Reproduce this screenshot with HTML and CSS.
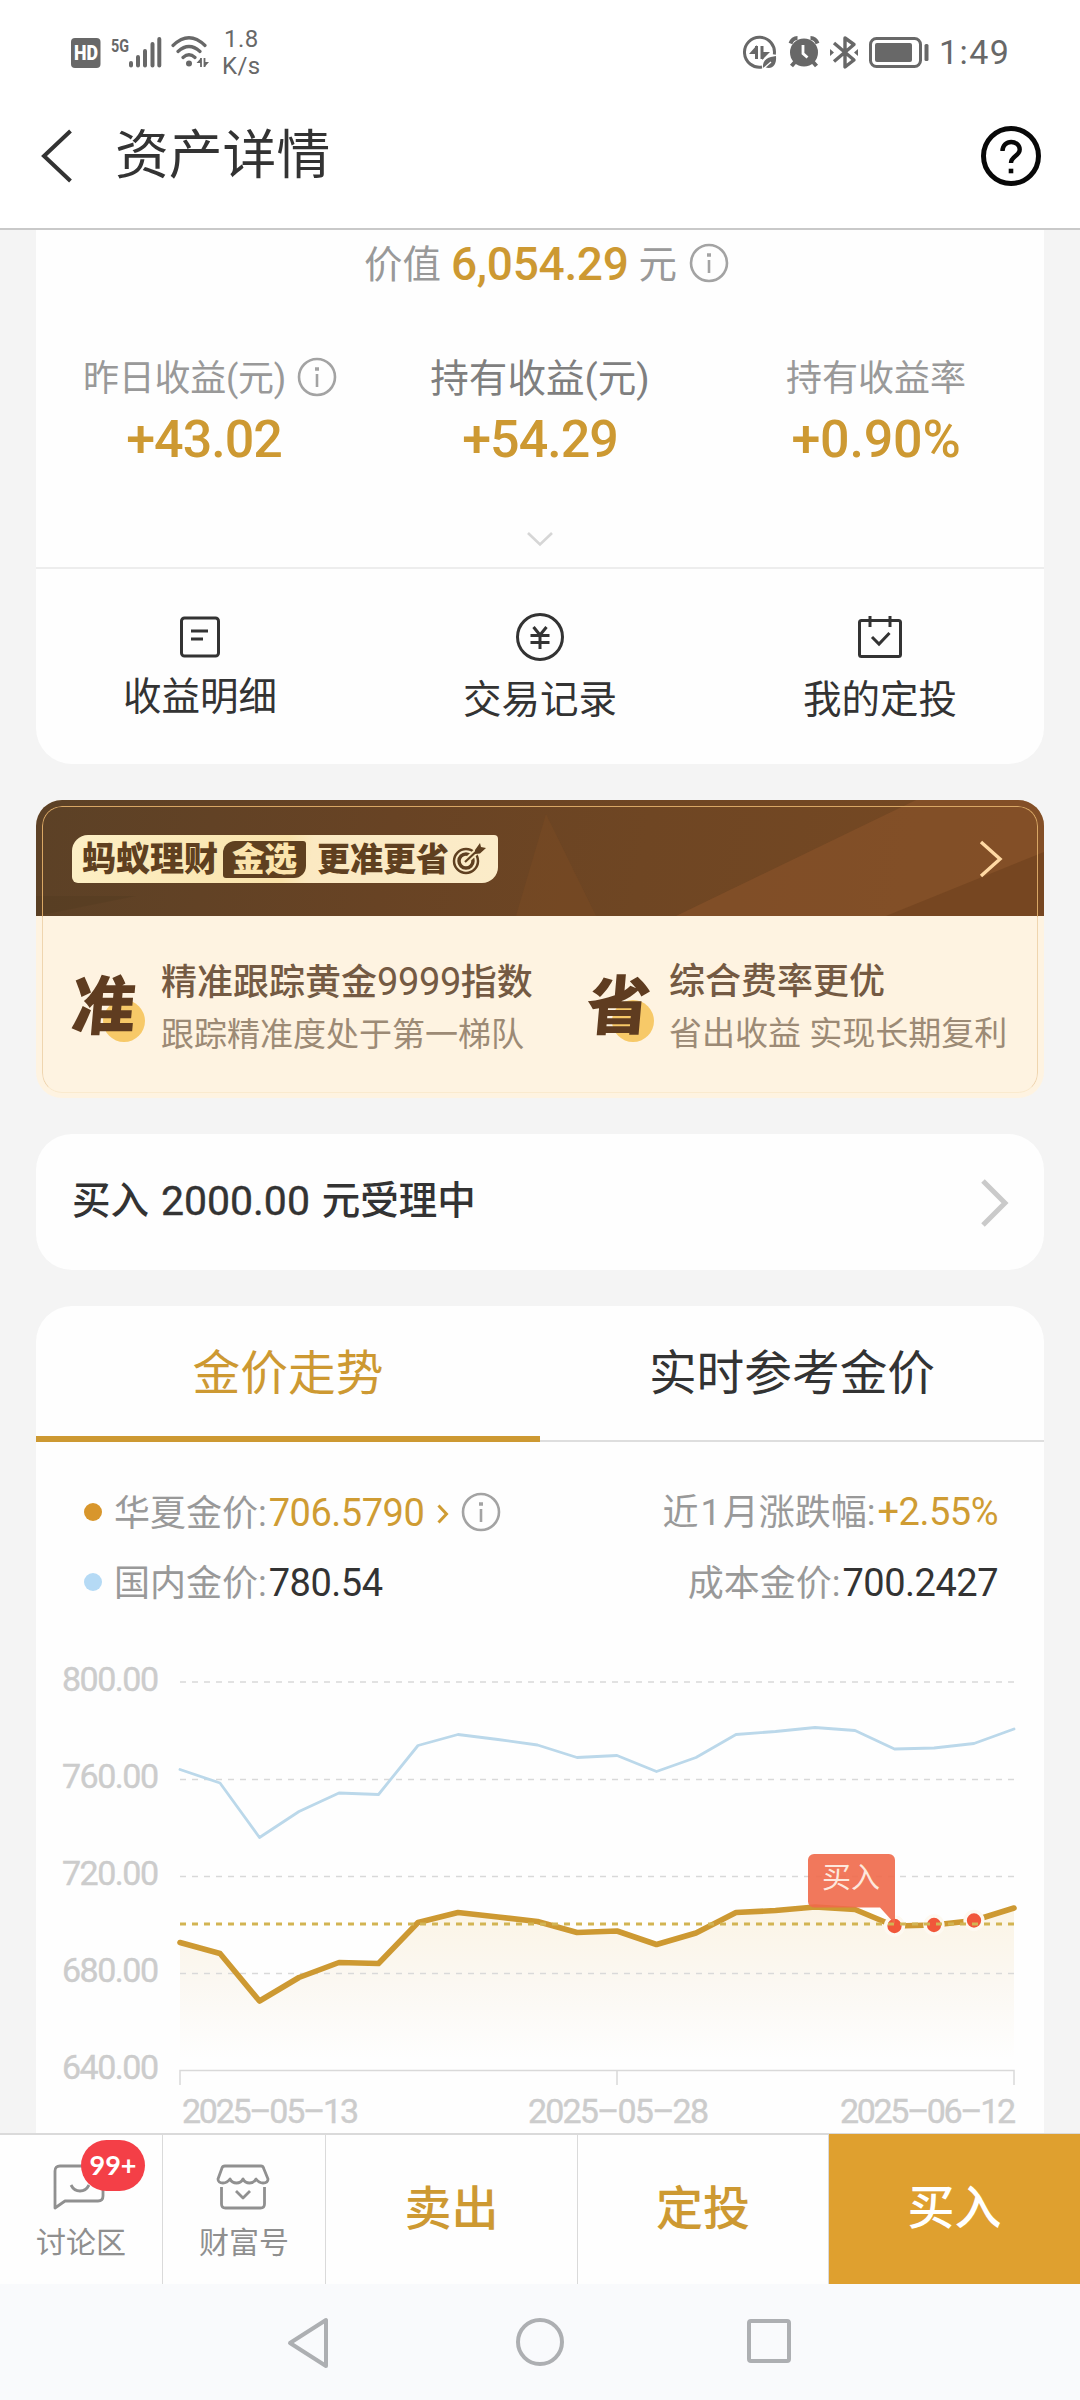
FILE: index.html
```html
<!DOCTYPE html>
<html lang="zh-CN">
<head>
<meta charset="utf-8">
<title>资产详情</title>
<link rel="stylesheet" href="styles.css">
</head>
<body>
<div class="screen">
  <div class="status">
    <svg class="status-left" width="150" height="40" viewBox="66 32 150 40">
      <rect x="71" y="38" width="29.500" height="30" rx="4" fill="#686868"/>
      <text x="74" y="60" class="st-hd" textLength="24" lengthAdjust="spacingAndGlyphs">HD</text>
      <text x="111" y="51.500" class="st-5g" textLength="18" lengthAdjust="spacingAndGlyphs">5G</text>
      <g stroke="#686868" stroke-width="4" stroke-linecap="round">
        <path d="M131 63v2.500M138 57v8.500M145 51v14.500M152.500 44v21.500M159.300 39v26.500"/>
      </g>
      <g fill="none" stroke="#686868" stroke-width="3.200" stroke-linecap="round">
        <path d="M173 45.500Q189 30 205 45.500M178 51.500Q189 41.500 200 51.500M183 57.500Q189 52 195 57.500"/>
      </g>
      <circle cx="189" cy="63.500" r="3" fill="#686868"/>
      <path d="M201 58v9M204.500 58v9" stroke="#686868" stroke-width="1.800"/>
      <path d="M201 58l-4.500 5h4.500zM204.500 67l4.500-5h-4.500z" fill="#686868"/>
    </svg>
    <div class="speed"><span>1.8</span><span>K/s</span></div>
    <svg class="status-right" width="190" height="40" viewBox="740 32 190 40">
      <path d="M762 67A15 15 0 1 1 774.300 54.500" fill="none" stroke="#686868" stroke-width="3"/>
      <path d="M756.500 46v13M762 46v13" stroke="#686868" stroke-width="3"/>
      <path d="M757 45l-8 9h8zM762 60l8-8h-8z" fill="#686868"/>
      <path d="M763 68c-1-9 6-11 13-12c1 10-5 14-11 11z" fill="#686868"/>
      <path d="M763 69l8-7" stroke="#fff" stroke-width="1.300"/>
      <circle cx="804" cy="52.500" r="14" fill="#686868"/>
      <path d="M790.500 43.500q2-5.500 7-5.500M817.500 43.500q-2-5.500-7-5.500" fill="none" stroke="#686868" stroke-width="4"/>
      <path d="M795 62l-3.500 4M813 62l3.500 4" stroke="#686868" stroke-width="4"/>
      <path d="M803 45v8.500l4.500 4" fill="none" stroke="#fff" stroke-width="2.800"/>
      <path d="M834 43l20 17-9 7V38l9 6.500-20 17" fill="none" stroke="#686868" stroke-width="3.400" stroke-linejoin="round"/>
      <path d="M830 49l4 3.500-4 3.500zM858 49l-4 3.500 4 3.500z" fill="#686868"/>
      <rect x="870.500" y="38.500" width="50" height="28" rx="6" fill="none" stroke="#686868" stroke-width="3"/>
      <rect x="875" y="43" width="37" height="19" rx="2" fill="#686868"/>
      <rect x="924.500" y="44" width="4" height="17" rx="1.500" fill="#686868"/>
    </svg>
    <span class="clock">1:49</span>
  </div>

  <header class="nav">
    <svg width="32" height="54" viewBox="0 0 32 54"><path d="M29.500 2L3 27l26.500 25" fill="none" stroke="#333" stroke-width="4"/></svg>
    <h1>资产详情</h1>
    <svg class="help" width="60" height="60" viewBox="0 0 60 60" fill="none" stroke="#080808">
      <circle cx="30" cy="30" r="27.500" stroke-width="5"/>
      <path d="M21.500 25c0-5.500 4-9 8.700-9 5 0 8.500 3.300 8.500 7.500 0 6.500-8.700 6.500-8.700 13.500" stroke-width="4.400"/>
      <path d="M27.700 45h4.600" stroke-width="4.600"/>
    </svg>
  </header>

  <main>
    <section class="card asset">
      <div class="value-row">
        <span class="value-label">价值</span><b class="value-num">6,054.29</b><span class="value-label">元</span>
        <svg class="info" width="40" height="40" viewBox="0 0 40 40"><circle cx="20" cy="20" r="18"/><path d="M20 17v13"/><path class="tip" d="M18 12h4"/></svg>
      </div>
      <div class="stats">
        <div class="stat first">
          <div class="stat-label"><span>昨日收益(元)</span><svg class="info" width="40" height="40" viewBox="0 0 40 40"><circle cx="20" cy="20" r="18"/><path d="M20 17v13"/><path class="tip" d="M18 12h4"/></svg></div>
          <div class="stat-num">+43.02</div>
        </div>
        <div class="stat active">
          <div class="stat-label"><span>持有收益(元)</span></div>
          <div class="stat-num">+54.29</div>
        </div>
        <div class="stat">
          <div class="stat-label"><span>持有收益率</span></div>
          <div class="stat-num percent">+0.90%</div>
        </div>
      </div>
      <div class="expand"><svg width="28" height="16" viewBox="0 0 28 16"><path d="M2 2l12 11.500L26 2" fill="none" stroke="#d6d6d6" stroke-width="2.600"/></svg></div>
      <div class="actions">
        <div class="action up">
          <svg width="54" height="54" viewBox="0 0 54 54"><rect x="8.500" y="8" width="37" height="38" rx="3"/><path d="M18 21h17M18 29h12"/></svg>
          <span>收益明细</span>
        </div>
        <div class="action">
          <svg width="54" height="54" viewBox="0 0 54 54"><circle cx="27" cy="27" r="22.500"/><path d="M20.500 17l6.500 8 6.500-8M27 25v14M17.500 25.500h19M17.500 32.500h19"/></svg>
          <span>交易记录</span>
        </div>
        <div class="action">
          <svg width="54" height="54" viewBox="0 0 54 54"><rect x="6.500" y="10.500" width="41" height="36" rx="2"/><path d="M17 6v11M37 6v11M19 27l7 7 10.500-11"/></svg>
          <span>我的定投</span>
        </div>
      </div>
    </section>

    <section class="banner">
      <div class="banner-top">
        <svg class="facets" width="1008" height="116" viewBox="0 0 1008 116">
          <path d="M100 96L0 116V96z" fill="#4f3820" opacity=".35"/>
          <path d="M480 116L510 14l50 102z" fill="#865026" opacity=".3"/>
          <path d="M640 116L880 0h128v116z" fill="#8f552c" opacity=".5"/>
          <path d="M850 116L1008 52v64z" fill="#693e1b" opacity=".5"/>
        </svg>
        <div class="pill">
          <span class="brand">蚂蚁理财</span><span class="pick">金选</span><span class="slogan">更准更省</span>
          <svg width="34" height="34" viewBox="0 0 34 34" fill="none" stroke="#5f4020">
            <circle cx="14" cy="19" r="12" stroke-width="2.500"/><circle cx="14" cy="19" r="7" stroke-width="3.500"/>
            <path d="M14 19L26 8" stroke="#fbe9bd" stroke-width="6"/><path d="M13 20L27 7" stroke-width="2.200"/>
            <path d="M23 8l5-7 1 4 5 1-6 5.500-5 .5z" fill="#5f4020" stroke="none"/>
          </svg>
        </div>
        <svg class="go" width="24" height="38" viewBox="0 0 24 38"><path d="M2 2l19 17L2 36" fill="none" stroke="#ffd9a3" stroke-width="3.400"/></svg>
      </div>
      <div class="benefits">
        <div class="benefit">
          <span class="glyph">准</span>
          <div><h3>精准跟踪黄金<i>9999</i>指数</h3><p>跟踪精准度处于第一梯队</p></div>
        </div>
        <div class="benefit">
          <span class="glyph">省</span>
          <div><h3>综合费率更优</h3><p>省出收益 实现长期复利</p></div>
        </div>
      </div>
      <div class="frame"></div>
    </section>

    <section class="card pending">
      <span>买入 <i>2000.00</i> 元受理中</span>
      <svg width="30" height="50" viewBox="0 0 30 50"><path d="M3 3l22 22L3 47" fill="none" stroke="#cacaca" stroke-width="5"/></svg>
    </section>

    <section class="card trend">
      <div class="tabs"><div class="tab on">金价走势</div><div class="tab">实时参考金价</div></div>
      <div class="legend">
        <div class="leg"><span class="dot gold"></span>华夏金价:<b class="g">706.5790</b>
          <svg class="mini" width="12" height="20" viewBox="0 0 12 20"><path d="M1.500 1.500L9.500 10l-8 8.500" fill="none" stroke="#cf9c33" stroke-width="3"/></svg>
          <svg class="info" width="40" height="40" viewBox="0 0 40 40"><circle cx="20" cy="20" r="18"/><path d="M20 17v13"/><path class="tip" d="M18 12h4"/></svg>
        </div>
        <div class="leg lift"><span>近<i>1</i>月涨跌幅:</span><b class="g">+2.55%</b></div>
      </div>
      <div class="legend second">
        <div class="leg"><span class="dot blue"></span>国内金价:<b>780.54</b></div>
        <div class="leg">成本金价:<b>700.2427</b></div>
      </div>
      <svg class="chart" width="1008" height="517" viewBox="36 1616 1008 517">
        <defs><linearGradient id="area" x1="0" y1="1905" x2="0" y2="2060" gradientUnits="userSpaceOnUse"><stop offset="0" stop-color="#fbf4e5"/><stop offset=".5" stop-color="#fbf8f2"/><stop offset="1" stop-color="#fefefe"/></linearGradient></defs>
        <g class="ylab">
          <text x="62" y="1691" textLength="97">800.00</text>
          <text x="62" y="1788" textLength="97">760.00</text>
          <text x="62" y="1885" textLength="97">720.00</text>
          <text x="62" y="1982" textLength="97">680.00</text>
          <text x="62" y="2079" textLength="97">640.00</text>
        </g>
        <path fill="url(#area)" d="M180 1942.500L220 1953.500 259.500 2001 299 1977.500 339 1962.500 378.500 1963.500 418 1922.500 458 1912.500 498 1917 537.500 1921.500 577 1932.500 617 1931 656.500 1944.500 696 1933 736 1912.500 775.500 1910.500 815 1907 855 1909.500 894.500 1926 934 1925 974 1920.500 1014 1908V2070H180z"/>
        <path d="M180 1682h834M180 1779.500h834M180 1876.500h834M180 1973.500h834" stroke="#d9d9d9" stroke-width="1.600" stroke-dasharray="6 6"/>
        <path d="M180 2085v-14.500h834V2085M617 2070.500V2085" fill="none" stroke="#d9d9d9" stroke-width="1.500"/>
        <path fill="none" stroke="#bbd8ea" stroke-width="2.800" stroke-linejoin="round" stroke-linecap="round" d="M180 1769.500L220 1783 259.500 1837.500 299 1811.500 339 1793 378.500 1794.500 418 1745.500 458 1734.500 498 1739.500 537.500 1745 577 1757.500 617 1755.500 656.500 1771.500 696 1757.500 736 1734.500 775.500 1731.500 815 1727.500 855 1730.500 894.500 1749 934 1748 974 1743.500 1014 1729"/>
        <path fill="none" stroke="#cd9932" stroke-width="5.600" stroke-linejoin="round" stroke-linecap="round" d="M180 1942.500L220 1953.500 259.500 2001 299 1977.500 339 1962.500 378.500 1963.500 418 1922.500 458 1912.500 498 1917 537.500 1921.500 577 1932.500 617 1931 656.500 1944.500 696 1933 736 1912.500 775.500 1910.500 815 1907 855 1909.500 894.500 1926 934 1925 974 1920.500 1014 1908"/>
        <g fill="#f1573a" stroke="#fdf9f1" stroke-width="3.500"><circle cx="894.500" cy="1926" r="8.900"/><circle cx="934" cy="1925" r="8.900"/><circle cx="974" cy="1920.500" r="8.900"/></g>
        <path d="M180 1924h834" stroke="#d2b453" stroke-width="3" stroke-dasharray="6 6"/>
        <path d="M814 1854h75a6 6 0 0 1 6 6v64l-15-16.500h-66a6 6 0 0 1-6-6V1860a6 6 0 0 1 6-6z" fill="#f0694a" fill-opacity=".9"/>
        <text x="822" y="1888" class="tiptext" textLength="58">买入</text>
        <g class="ylab">
          <text x="182" y="2123" textLength="177">2025–05–13</text>
          <text x="528" y="2123" textLength="181">2025–05–28</text>
          <text x="840" y="2123" textLength="176">2025–06–12</text>
        </g>
      </svg>
    </section>
  </main>

  <footer class="bar">
    <div class="cell small">
      <svg width="56" height="48" viewBox="0 0 56 48"><path d="M4 45V8q0-5 5-5h38q5 0 5 5v25q0 5-5 5H14L4 45zM20 22q3 6 9 6t9-6"/></svg>
      <span>讨论区</span><b class="badge">99+</b>
    </div>
    <div class="cell small">
      <svg width="56" height="48" viewBox="0 0 56 48"><path d="M10 3h36q2 0 2.500 2L53 16q0 4-5 4-4 0-7-4-2 4-6.500 4t-6.500-4q-2 4-6.500 4T15 16q-3 4-7 4-5 0-5-4L7 5q.500-2 3-2zM6.500 24v17q0 4 4 4h35q4 0 4-4V24M21 28l7 7 7-7"/></svg>
      <span>财富号</span>
    </div>
    <div class="cell">卖出</div>
    <div class="cell">定投</div>
    <div class="cell buy">买入</div>
  </footer>

  <div class="sysnav">
    <svg width="44" height="52" viewBox="0 0 44 52"><path d="M40 3v46L4 26z"/></svg>
    <svg width="50" height="50" viewBox="0 0 50 50"><circle cx="25" cy="25" r="22"/></svg>
    <svg width="46" height="48" viewBox="0 0 46 48"><rect x="3" y="4" width="40" height="40" rx="2"/></svg>
  </div>
</div>
</body>
</html>
```
FILE: styles.css
```css
* { box-sizing: border-box; }
body { margin: 0; background: #fff; font-family: Roboto, "Noto Sans CJK SC", sans-serif; color: #333; }
h1, h3, p { margin: 0; font-weight: 400; }
i { font-style: normal; }
svg { display: block; flex: none; }
.screen { width: 1080px; height: 2400px; overflow: hidden; display: flex; flex-direction: column; background: #fff; }

.status { height: 80px; display: flex; align-items: flex-start; padding: 32px 72px 0 66px; color: #686868; }
.st-hd { font: 900 20px Roboto, sans-serif; fill: #fff; }
.st-5g { font: 700 19px Roboto, sans-serif; fill: #686868; }
.speed { margin: -6px 0 0 6px; display: flex; flex-direction: column; align-items: center; font-size: 24px; line-height: 27px; letter-spacing: .4px; }
.status-right { margin-left: auto; }
.clock { font-size: 34px; line-height: 40px; margin-left: 9px; letter-spacing: 1.400px; width: 69px; white-space: nowrap; }

.nav { height: 150px; border-bottom: 2px solid #c9c9c9; display: flex; align-items: center; padding: 4px 39px 0 41px; }
.nav h1 { font-size: 53.800px; line-height: 60px; margin: -1px 0 0 42px; }
.help { margin-left: auto; }

main { height: 1903px; overflow: hidden; background: #f4f4f4; padding: 0 36px; display: flex; flex-direction: column; gap: 36px; }
.card { background: #fefefe; border-radius: 36px; flex: none; }
.info { fill: none; stroke: #a3a3a3; stroke-width: 2.600; }
.info .tip { stroke-width: 3.500; }

.asset { height: 534px; border-radius: 0 0 36px 36px; }
.value-row { height: 66px; padding-left: 328px; display: flex; align-items: center; font-size: 38.500px; color: #999; }
.value-label { margin-top: -5px; }
.value-num { font-size: 46px; font-weight: 500; color: #cd9932; margin: 1px 10px 0 10px; letter-spacing: -.3px; }
.value-row .info { margin-left: 12px; }
.stats { margin-top: 52px; display: grid; grid-template-columns: repeat(3, 1fr); }
.stat-label { height: 60px; display: flex; align-items: center; justify-content: center; font-size: 36px; color: #999; }
.stat-label span { margin-top: -6px; }
.stat-label .info { margin: -2px 0 0 11px; }
.first .stat-label { padding-left: 12px; letter-spacing: -.3px; }
.active .stat-label { font-size: 38.600px; color: #7f7f7f; }
.stat-num { height: 60px; line-height: 64px; text-align: center; font-size: 52px; font-weight: 500; color: #cd9932; letter-spacing: -1px; }
.percent { letter-spacing: -.2px; }
.expand { height: 101px; padding-top: 63px; display: flex; justify-content: center; border-bottom: 2px solid #ededed; }
.actions { display: grid; grid-template-columns: 328px 352px 328px; padding-top: 41px; }
.action { display: flex; flex-direction: column; align-items: center; font-size: 38.500px; line-height: 50px; }
.action svg { fill: none; stroke: #333; stroke-width: 3; }
.action span { margin-top: 11px; }
.action.up span { margin-top: 8px; }

.banner { height: 298px; border-radius: 26px; overflow: hidden; position: relative; background: #fef3e1; flex: none; }
.banner-top { height: 116px; background: linear-gradient(100deg, #5c4126 0%, #684324 35%, #6f4623 60%, #774923 100%); position: relative; display: flex; align-items: center; justify-content: space-between; padding: 2px 41px 0 36px; }
.facets { position: absolute; left: 0; top: 0; }
.pill { position: relative; width: 426px; height: 48px; background: linear-gradient(100deg, #fdf0c6, #fae3ab 50%, #fbe9c2 56%, #fbecc9); border-radius: 16px 4px 16px 6px; padding-left: 10px; display: flex; align-items: center; font-family: "Noto Sans CJK SC", sans-serif; font-weight: 900; font-size: 34px; line-height: 44px; color: #5f4020; }
.brand, .slogan, .pick { position: relative; top: -2px; }
.pick { top: 0; margin-left: 5px; width: 83px; height: 37px; line-height: 32px; text-align: center; background: #5f4020; color: #fbe4ad; border-radius: 12px 3px 12px 3px; font-size: 32.500px; }
.slogan { margin-left: 11px; font-size: 33px; }
.pill svg { margin-left: 3px; }
.go { position: relative; }
.benefits { display: flex; padding: 36px 0 0 36px; }
.benefit { display: flex; flex: none; width: 515px; position: relative; }
.benefit::before { content: ""; position: absolute; left: 31px; top: 48px; width: 42px; height: 42px; border-radius: 50%; background: #f7c968; }
.glyph { position: relative; width: 66px; margin-right: 23px; font: 900 64px/64px "Noto Sans CJK SC", sans-serif; color: #5f3c20; transform: skewX(-5deg); padding-top: 17px; }
.benefit:nth-child(2)::before { left: 25px; }
.benefit:nth-child(2) .glyph { margin: 0 16px 0 0; }
.benefit h3 { font-size: 36px; line-height: 60px; font-weight: 500; color: #745a43; white-space: nowrap; }
.benefit h3 i { font-size: 38px; font-weight: 400; letter-spacing: -.4px; }
.benefit p { font-size: 33px; line-height: 44px; color: #9c8a75; white-space: nowrap; }
.frame { position: absolute; inset: 6px 6px 5px 6px; border: 1.500px solid #d9a765; border-bottom-color: #f4dcb2; border-radius: 20px; -webkit-mask: linear-gradient(#000 0 110px, rgba(0,0,0,.4) 111px); mask: linear-gradient(#000 0 110px, rgba(0,0,0,.4) 111px); }

.pending { height: 136px; display: flex; align-items: center; justify-content: space-between; padding: 2px 34px 0 36px; font-size: 38.500px; font-weight: 500; }
.pending span { margin-top: -12px; word-spacing: 2.300px; }
.pending i { position: relative; top: 1px; font-size: 41px; font-weight: 400; -webkit-text-stroke: .4px #333; }

.trend { height: 900px; border-radius: 36px 36px 0 0; }
.tabs { display: grid; grid-template-columns: 1fr 1fr; height: 136px; }
.tab { display: flex; align-items: center; justify-content: center; font-size: 47.700px; border-bottom: 2px solid #dedede; padding-bottom: 7px; }
.tab.on { color: #cd9932; border-bottom: 6px solid #cd9932; padding-bottom: 3px; }
.legend { display: flex; justify-content: space-between; height: 70px; margin-top: 35px; padding: 0 46px 0 48px; }
.legend.second { margin-top: 0; }
.leg { display: flex; align-items: center; font-size: 36px; color: #999; padding-bottom: 4px; }
.leg.lift { padding-bottom: 7px; }
.leg i { padding: 0 2px; }
.leg b { font-size: 38px; font-weight: 400; color: #333; letter-spacing: -.5px; margin: 6px 0 0 2px; }
.leg b.g { color: #cf9c33; }
.leg .info { margin-top: 4px; }
.dot { width: 18px; height: 18px; border-radius: 50%; margin: 3px 12px 0 0; }
.gold { background: #d8962c; }
.blue { background: #b5daf5; }
.mini { margin: 8px 12px 0 13px; }
.chart { margin-top: -1px; }
.ylab text { font-size: 34px; fill: #ccc; stroke: #ccc; stroke-width: .4px; }
.tiptext { font-size: 29px; fill: #fde8dd; }

.bar { height: 151px; flex: none; border-top: 2px solid #dadada; display: grid; grid-template-columns: 163px 163px 252px 251px 1fr; background: #fefefe; }
.cell { border-right: 1.500px solid #dadada; display: flex; align-items: center; justify-content: center; font-size: 47px; font-weight: 500; color: #cd9932; padding-bottom: 11px; }
.cell.buy { background: #dfa02f; color: #fff; border: 0; margin-top: -1px; }
.small { position: relative; flex-direction: column; justify-content: flex-start; padding: 28px 0 0; font-size: 30px; font-weight: 400; color: #8f8f8f; }
.small svg { fill: none; stroke: #909090; stroke-width: 2.800; stroke-linejoin: round; margin-left: -2px; }
.small span { margin-top: 12px; line-height: 40px; }
.small:first-child svg { margin-left: -4px; }
.badge { position: absolute; left: 81px; top: 5px; width: 64px; height: 51px; border-radius: 26px; background: #f43f47; color: #fff; font: 700 27px/50px Lato, sans-serif; text-align: center; }

.sysnav { flex: 1; background: #f9fafc; display: flex; align-items: flex-start; padding: 33px 0 0 286px; }
.sysnav svg { fill: none; stroke: #adafb2; stroke-width: 4; stroke-linejoin: round; }
.sysnav svg:nth-child(2) { margin-left: 185px; }
.sysnav svg:nth-child(3) { margin-left: 181px; }
```
